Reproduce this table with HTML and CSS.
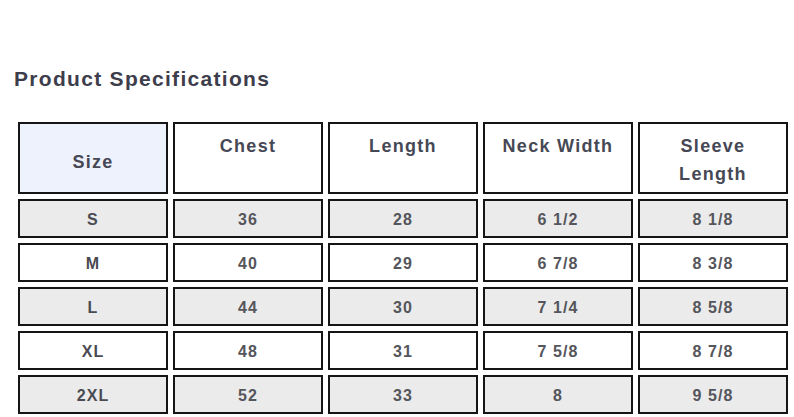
FILE: index.html
```html
<!DOCTYPE html>
<html>
<head>
<meta charset="utf-8">
<link rel="stylesheet" href="styles.css">
</head>
<body>
<div class="page">
  <h1 class="title">Product Specifications</h1>
  <table class="specs">
    <thead>
      <tr class="head-row">
        <th class="size-head">Size</th>
        <th>Chest</th>
        <th>Length</th>
        <th>Neck Width</th>
        <th>Sleeve<br>Length</th>
      </tr>
    </thead>
    <tbody>
      <tr class="shade"><td class="size">S</td><td>36</td><td>28</td><td>6 1/2</td><td>8 1/8</td></tr>
      <tr><td class="size">M</td><td>40</td><td>29</td><td>6 7/8</td><td>8 3/8</td></tr>
      <tr class="shade"><td class="size">L</td><td>44</td><td>30</td><td>7 1/4</td><td>8 5/8</td></tr>
      <tr><td class="size">XL</td><td>48</td><td>31</td><td>7 5/8</td><td>8 7/8</td></tr>
      <tr class="shade"><td class="size">2XL</td><td>52</td><td>33</td><td>8</td><td>9 5/8</td></tr>
    </tbody>
  </table>
</div>
</body>
</html>
```

FILE: styles.css
```css
html, body {
  margin: 0;
  padding: 0;
  background: #ffffff;
}

.page {
  width: 794px;
  height: 417px;
  overflow: hidden;
  font-family: "Liberation Sans", Arial, sans-serif;
}

.title {
  margin: 0;
  padding: 67px 0 0 14px;
  font-size: 21px;
  line-height: 24px;
  font-weight: bold;
  letter-spacing: 1.3px;
  color: #3d3d4b;
}

.specs {
  margin: 26px 0 0 13px;
  border-collapse: separate;
  border-spacing: 5px;
  table-layout: fixed;
}

.specs th,
.specs td {
  width: 150px;
  box-sizing: border-box;
  border: 2px solid #151515;
  text-align: center;
  padding: 0 4px;
}

.head-row {
  height: 72px;
}

.specs th {
  vertical-align: top;
  padding-top: 8px;
  font-size: 18px;
  line-height: 28px;
  font-weight: bold;
  letter-spacing: 1.3px;
  color: #464855;
  background: #ffffff;
}

.specs th.size-head {
  vertical-align: middle;
  padding-top: 7px;
  background: #eef2fc;
}

.specs tbody tr {
  height: 39px;
}

.specs td {
  vertical-align: middle;
  padding-top: 2px;
  font-size: 16px;
  line-height: 20px;
  font-weight: bold;
  letter-spacing: 1.1px;
  color: #55555c;
  background: #ffffff;
}

.specs td.size {
  color: #4a4a52;
}

.specs tr.shade td {
  background: #ebebeb;
}
```
